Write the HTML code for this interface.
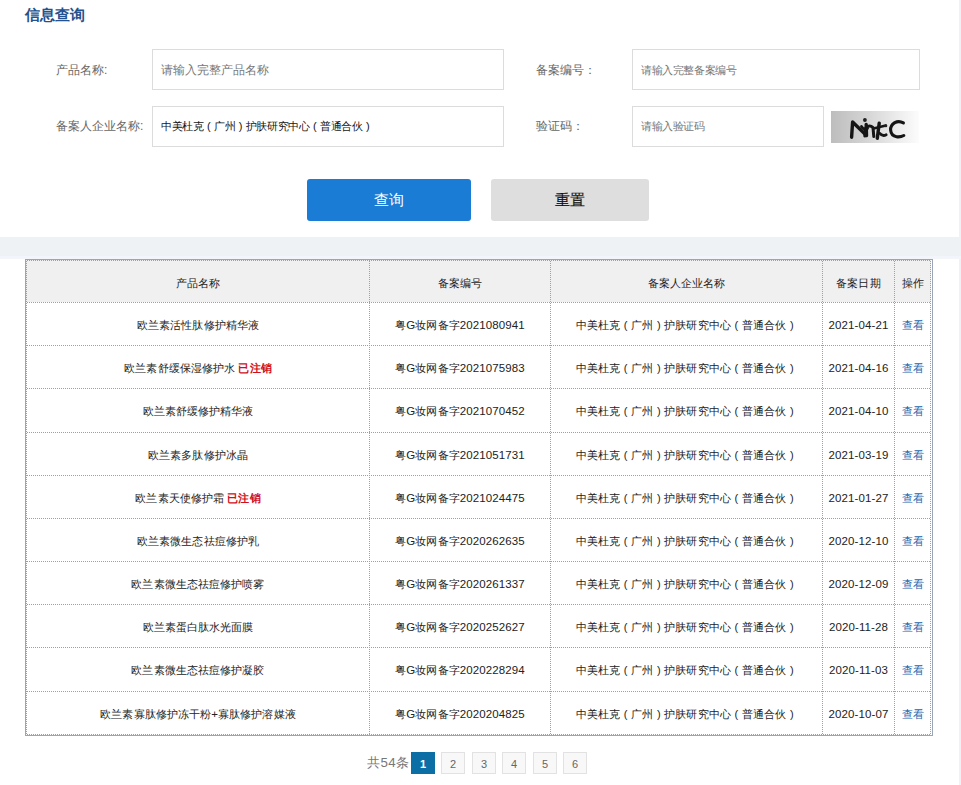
<!DOCTYPE html>
<html><head><meta charset="utf-8">
<style>
*{margin:0;padding:0;box-sizing:border-box}
html,body{width:961px;height:785px;overflow:hidden;background:#fff;font-family:"Liberation Sans",sans-serif;font-size:12px;color:#333}
.abs{position:absolute}
.strip{left:959px;top:0;width:2px;height:785px;background:#eff1f4}
.band{left:0;top:237px;width:961px;height:22px;background:linear-gradient(180deg,#eff2f5 0 19px,#f2f6fa 19px 22px)}
.title{left:25px;top:5px;font-size:15px;font-weight:bold;color:#24528e;line-height:20px;white-space:nowrap}
.lbl{color:#666;font-size:12px;line-height:16px;white-space:nowrap}
.inp{border:1px solid #dcdcdc;background:#fff;height:41px}
.ph{color:#777;font-size:12px;line-height:16px;white-space:nowrap}
.val{color:#151515;font-size:11px;letter-spacing:-0.4px;line-height:16px;white-space:nowrap}
.btn{top:179px;height:42px;border-radius:3px;font-size:15px;text-align:center;line-height:41px}
.captcha{left:831px;top:111px;width:88px;height:32px;background:linear-gradient(90deg,#bdbdbd 0%,#d4d4d4 40%,#ececec 75%,#fcfcfc 100%)}
.tbox{left:25px;top:259px;width:908px;height:477px;border:1px solid #9aa5b8}
.hbg{background:#f1f0f0}
.hd{height:1px;background:repeating-linear-gradient(90deg,transparent 0 1px,#a0a0a0 1px 2px)}
.vd{width:1px;background:repeating-linear-gradient(180deg,transparent 0 1px,#a0a0a0 1px 2px)}
.c{text-align:center;font-size:11px;color:#222;letter-spacing:0.1px;white-space:nowrap;padding-top:1px}
.th{padding-top:1.5px;color:#222}
.lt{font-size:11.5px}
.pl,.pr{font-style:normal;display:inline-block;width:11px;text-align:center;font-size:11px}
.red{color:#d0101c;font-weight:bold}
.lnk{color:#2766ad;margin-left:2px}
.pg{top:752px;height:22px;width:24px;border:1px solid #e2e2e2;background:#f8f8f8;color:#666;font-size:11px;text-align:center;line-height:21px;padding-top:1px}
.pg.on{background:#0b6fa6;border-color:#0b6fa6;color:#fff;font-weight:bold;font-size:11px}
</style></head><body>
<div class="abs strip"></div>
<div class="abs band"></div>
<div class="abs title">信息查询</div>

<div class="abs lbl" style="left:56px;top:62px">产品名称:</div>
<div class="abs inp" style="left:152px;top:49px;width:352px"></div>
<div class="abs ph" style="left:161px;top:62px">请输入完整产品名称</div>

<div class="abs lbl" style="left:536px;top:62px">备案编号：</div>
<div class="abs inp" style="left:632px;top:49px;width:288px"></div>
<div class="abs ph" style="left:641px;top:62px;font-size:11px;letter-spacing:-0.4px">请输入完整备案编号</div>

<div class="abs lbl" style="left:56px;top:118px">备案人企业名称:</div>
<div class="abs inp" style="left:152px;top:106px;width:352px"></div>
<div class="abs val" style="left:161px;top:118px">中美杜克<i class="pl" style="font-size:11px;width:10.6px">(</i>广州<i class="pr" style="font-size:11px;width:10.6px">)</i>护肤研究中心<i class="pl" style="font-size:11px;width:10.6px">(</i>普通合伙<i class="pr" style="font-size:11px;width:10.6px">)</i></div>

<div class="abs lbl" style="left:536px;top:118px">验证码：</div>
<div class="abs inp" style="left:632px;top:106px;width:192px"></div>
<div class="abs ph" style="left:641px;top:118px;font-size:11px;letter-spacing:-0.4px">请输入验证码</div>

<div class="abs captcha"><svg width="88" height="32" viewBox="0 0 88 32" style="position:absolute;left:0;top:0">
<g fill="none" stroke="#151515" stroke-linecap="round" stroke-linejoin="round" style="filter:blur(0.3px)">
<path d="M20.6 26.2 L21.6 11 L35.5 24.5 L35.2 13.5" stroke-width="3.4"/>
<path d="M33.8 25 L34.6 17 Q38.5 13 42 16.6 L42.8 25.5" stroke-width="3"/>
<path d="M30.5 15.5 Q33.5 20 36.5 17.5" stroke-width="2.8"/>
<circle cx="33.9" cy="9" r="1.9" fill="#222" stroke="none"/>
<path d="M46.3 27.2 L48.2 12.2" stroke-width="3.4"/>
<path d="M42.5 17.4 L54.8 14.6" stroke-width="2.6"/>
<path d="M48.5 22.2 Q51.5 25.8 55.2 23.8" stroke-width="2.8"/>
<circle cx="54.8" cy="14.8" r="1.5" fill="#222" stroke="none"/>
<path d="M72.4 11.9 Q68 9.4 63.8 11.6 Q59.2 14.5 59.6 19.2 Q60.2 25 65.5 25.7 Q69.5 26.3 72.8 24.5" stroke-width="3.1"/>
</g></svg></div>

<div class="abs btn" style="left:307px;width:164px;background:#1a7cd5;color:#fff">查询</div>
<div class="abs btn" style="left:491px;width:158px;background:#dedede;color:#111;-webkit-text-stroke:0.15px #111">重置</div>
<div class="abs hbg" style="left:26px;top:260px;width:905px;height:42px"></div>
<div class="abs hd" style="left:26px;top:260px;width:905px"></div>
<div class="abs hd" style="left:26px;top:302px;width:905px"></div>
<div class="abs hd" style="left:26px;top:345px;width:905px"></div>
<div class="abs hd" style="left:26px;top:388px;width:905px"></div>
<div class="abs hd" style="left:26px;top:432px;width:905px"></div>
<div class="abs hd" style="left:26px;top:475px;width:905px"></div>
<div class="abs hd" style="left:26px;top:518px;width:905px"></div>
<div class="abs hd" style="left:26px;top:561px;width:905px"></div>
<div class="abs hd" style="left:26px;top:604px;width:905px"></div>
<div class="abs hd" style="left:26px;top:647px;width:905px"></div>
<div class="abs hd" style="left:26px;top:691px;width:905px"></div>
<div class="abs hd" style="left:26px;top:734px;width:905px"></div>
<div class="abs vd" style="left:26px;top:260px;height:475px"></div>
<div class="abs vd" style="left:369px;top:260px;height:475px"></div>
<div class="abs vd" style="left:550px;top:260px;height:475px"></div>
<div class="abs vd" style="left:822px;top:260px;height:475px"></div>
<div class="abs vd" style="left:894px;top:260px;height:475px"></div>
<div class="abs vd" style="left:930px;top:260px;height:475px"></div>
<div class="abs tbox"></div>
<div class="abs c th" style="left:27px;top:261px;width:342px;height:41px;line-height:41px;">产品名称</div>
<div class="abs c th" style="left:370px;top:261px;width:180px;height:41px;line-height:41px;">备案编号</div>
<div class="abs c th" style="left:551px;top:261px;width:271px;height:41px;line-height:41px;">备案人企业名称</div>
<div class="abs c th" style="left:823px;top:261px;width:71px;height:41px;line-height:41px;">备案日期</div>
<div class="abs c th" style="left:895px;top:261px;width:35px;height:41px;line-height:41px;padding-left:2px;">操作</div>
<div class="abs c" style="left:27px;top:303px;width:342px;height:42px;line-height:42px;">欧兰素活性肽修护精华液</div>
<div class="abs c" style="left:370px;top:303px;width:180px;height:42px;line-height:42px;">粤<span class="lt">G</span>妆网备字<span class="lt">2021080941</span></div>
<div class="abs c" style="left:551px;top:303px;width:271px;height:42px;line-height:42px;">中美杜克<i class="pl">(</i>广州<i class="pr">)</i>护肤研究中心<i class="pl">(</i>普通合伙<i class="pr">)</i></div>
<div class="abs c" style="left:823px;top:303px;width:71px;height:42px;line-height:42px;"><span class="lt">2021-04-21</span></div>
<div class="abs c" style="left:895px;top:303px;width:35px;height:42px;line-height:42px;"><span class="lnk">查看</span></div>
<div class="abs c" style="left:27px;top:346px;width:342px;height:42px;line-height:42px;">欧兰素舒缓保湿修护水 <span class="red">已注销</span></div>
<div class="abs c" style="left:370px;top:346px;width:180px;height:42px;line-height:42px;">粤<span class="lt">G</span>妆网备字<span class="lt">2021075983</span></div>
<div class="abs c" style="left:551px;top:346px;width:271px;height:42px;line-height:42px;">中美杜克<i class="pl">(</i>广州<i class="pr">)</i>护肤研究中心<i class="pl">(</i>普通合伙<i class="pr">)</i></div>
<div class="abs c" style="left:823px;top:346px;width:71px;height:42px;line-height:42px;"><span class="lt">2021-04-16</span></div>
<div class="abs c" style="left:895px;top:346px;width:35px;height:42px;line-height:42px;"><span class="lnk">查看</span></div>
<div class="abs c" style="left:27px;top:389px;width:342px;height:43px;line-height:43px;">欧兰素舒缓修护精华液</div>
<div class="abs c" style="left:370px;top:389px;width:180px;height:43px;line-height:43px;">粤<span class="lt">G</span>妆网备字<span class="lt">2021070452</span></div>
<div class="abs c" style="left:551px;top:389px;width:271px;height:43px;line-height:43px;">中美杜克<i class="pl">(</i>广州<i class="pr">)</i>护肤研究中心<i class="pl">(</i>普通合伙<i class="pr">)</i></div>
<div class="abs c" style="left:823px;top:389px;width:71px;height:43px;line-height:43px;"><span class="lt">2021-04-10</span></div>
<div class="abs c" style="left:895px;top:389px;width:35px;height:43px;line-height:43px;"><span class="lnk">查看</span></div>
<div class="abs c" style="left:27px;top:433px;width:342px;height:42px;line-height:42px;">欧兰素多肽修护冰晶</div>
<div class="abs c" style="left:370px;top:433px;width:180px;height:42px;line-height:42px;">粤<span class="lt">G</span>妆网备字<span class="lt">2021051731</span></div>
<div class="abs c" style="left:551px;top:433px;width:271px;height:42px;line-height:42px;">中美杜克<i class="pl">(</i>广州<i class="pr">)</i>护肤研究中心<i class="pl">(</i>普通合伙<i class="pr">)</i></div>
<div class="abs c" style="left:823px;top:433px;width:71px;height:42px;line-height:42px;"><span class="lt">2021-03-19</span></div>
<div class="abs c" style="left:895px;top:433px;width:35px;height:42px;line-height:42px;"><span class="lnk">查看</span></div>
<div class="abs c" style="left:27px;top:476px;width:342px;height:42px;line-height:42px;">欧兰素天使修护霜 <span class="red">已注销</span></div>
<div class="abs c" style="left:370px;top:476px;width:180px;height:42px;line-height:42px;">粤<span class="lt">G</span>妆网备字<span class="lt">2021024475</span></div>
<div class="abs c" style="left:551px;top:476px;width:271px;height:42px;line-height:42px;">中美杜克<i class="pl">(</i>广州<i class="pr">)</i>护肤研究中心<i class="pl">(</i>普通合伙<i class="pr">)</i></div>
<div class="abs c" style="left:823px;top:476px;width:71px;height:42px;line-height:42px;"><span class="lt">2021-01-27</span></div>
<div class="abs c" style="left:895px;top:476px;width:35px;height:42px;line-height:42px;"><span class="lnk">查看</span></div>
<div class="abs c" style="left:27px;top:519px;width:342px;height:42px;line-height:42px;">欧兰素微生态祛痘修护乳</div>
<div class="abs c" style="left:370px;top:519px;width:180px;height:42px;line-height:42px;">粤<span class="lt">G</span>妆网备字<span class="lt">2020262635</span></div>
<div class="abs c" style="left:551px;top:519px;width:271px;height:42px;line-height:42px;">中美杜克<i class="pl">(</i>广州<i class="pr">)</i>护肤研究中心<i class="pl">(</i>普通合伙<i class="pr">)</i></div>
<div class="abs c" style="left:823px;top:519px;width:71px;height:42px;line-height:42px;"><span class="lt">2020-12-10</span></div>
<div class="abs c" style="left:895px;top:519px;width:35px;height:42px;line-height:42px;"><span class="lnk">查看</span></div>
<div class="abs c" style="left:27px;top:562px;width:342px;height:42px;line-height:42px;">欧兰素微生态祛痘修护喷雾</div>
<div class="abs c" style="left:370px;top:562px;width:180px;height:42px;line-height:42px;">粤<span class="lt">G</span>妆网备字<span class="lt">2020261337</span></div>
<div class="abs c" style="left:551px;top:562px;width:271px;height:42px;line-height:42px;">中美杜克<i class="pl">(</i>广州<i class="pr">)</i>护肤研究中心<i class="pl">(</i>普通合伙<i class="pr">)</i></div>
<div class="abs c" style="left:823px;top:562px;width:71px;height:42px;line-height:42px;"><span class="lt">2020-12-09</span></div>
<div class="abs c" style="left:895px;top:562px;width:35px;height:42px;line-height:42px;"><span class="lnk">查看</span></div>
<div class="abs c" style="left:27px;top:605px;width:342px;height:42px;line-height:42px;">欧兰素蛋白肽水光面膜</div>
<div class="abs c" style="left:370px;top:605px;width:180px;height:42px;line-height:42px;">粤<span class="lt">G</span>妆网备字<span class="lt">2020252627</span></div>
<div class="abs c" style="left:551px;top:605px;width:271px;height:42px;line-height:42px;">中美杜克<i class="pl">(</i>广州<i class="pr">)</i>护肤研究中心<i class="pl">(</i>普通合伙<i class="pr">)</i></div>
<div class="abs c" style="left:823px;top:605px;width:71px;height:42px;line-height:42px;"><span class="lt">2020-11-28</span></div>
<div class="abs c" style="left:895px;top:605px;width:35px;height:42px;line-height:42px;"><span class="lnk">查看</span></div>
<div class="abs c" style="left:27px;top:648px;width:342px;height:43px;line-height:43px;">欧兰素微生态祛痘修护凝胶</div>
<div class="abs c" style="left:370px;top:648px;width:180px;height:43px;line-height:43px;">粤<span class="lt">G</span>妆网备字<span class="lt">2020228294</span></div>
<div class="abs c" style="left:551px;top:648px;width:271px;height:43px;line-height:43px;">中美杜克<i class="pl">(</i>广州<i class="pr">)</i>护肤研究中心<i class="pl">(</i>普通合伙<i class="pr">)</i></div>
<div class="abs c" style="left:823px;top:648px;width:71px;height:43px;line-height:43px;"><span class="lt">2020-11-03</span></div>
<div class="abs c" style="left:895px;top:648px;width:35px;height:43px;line-height:43px;"><span class="lnk">查看</span></div>
<div class="abs c" style="left:27px;top:692px;width:342px;height:42px;line-height:42px;">欧兰素寡肽修护冻干粉<span class="lt">+</span>寡肽修护溶媒液</div>
<div class="abs c" style="left:370px;top:692px;width:180px;height:42px;line-height:42px;">粤<span class="lt">G</span>妆网备字<span class="lt">2020204825</span></div>
<div class="abs c" style="left:551px;top:692px;width:271px;height:42px;line-height:42px;">中美杜克<i class="pl">(</i>广州<i class="pr">)</i>护肤研究中心<i class="pl">(</i>普通合伙<i class="pr">)</i></div>
<div class="abs c" style="left:823px;top:692px;width:71px;height:42px;line-height:42px;"><span class="lt">2020-10-07</span></div>
<div class="abs c" style="left:895px;top:692px;width:35px;height:42px;line-height:42px;"><span class="lnk">查看</span></div>
<div class="abs" style="left:367px;top:755px;font-size:13px;letter-spacing:0.4px;color:#777;line-height:16px;white-space:nowrap">共<span style="font-size:13.3px">54</span>条</div>
<div class="abs pg on" style="left:411px">1</div>
<div class="abs pg" style="left:441px">2</div>
<div class="abs pg" style="left:472px">3</div>
<div class="abs pg" style="left:502px">4</div>
<div class="abs pg" style="left:533px">5</div>
<div class="abs pg" style="left:563px">6</div>
</body></html>
